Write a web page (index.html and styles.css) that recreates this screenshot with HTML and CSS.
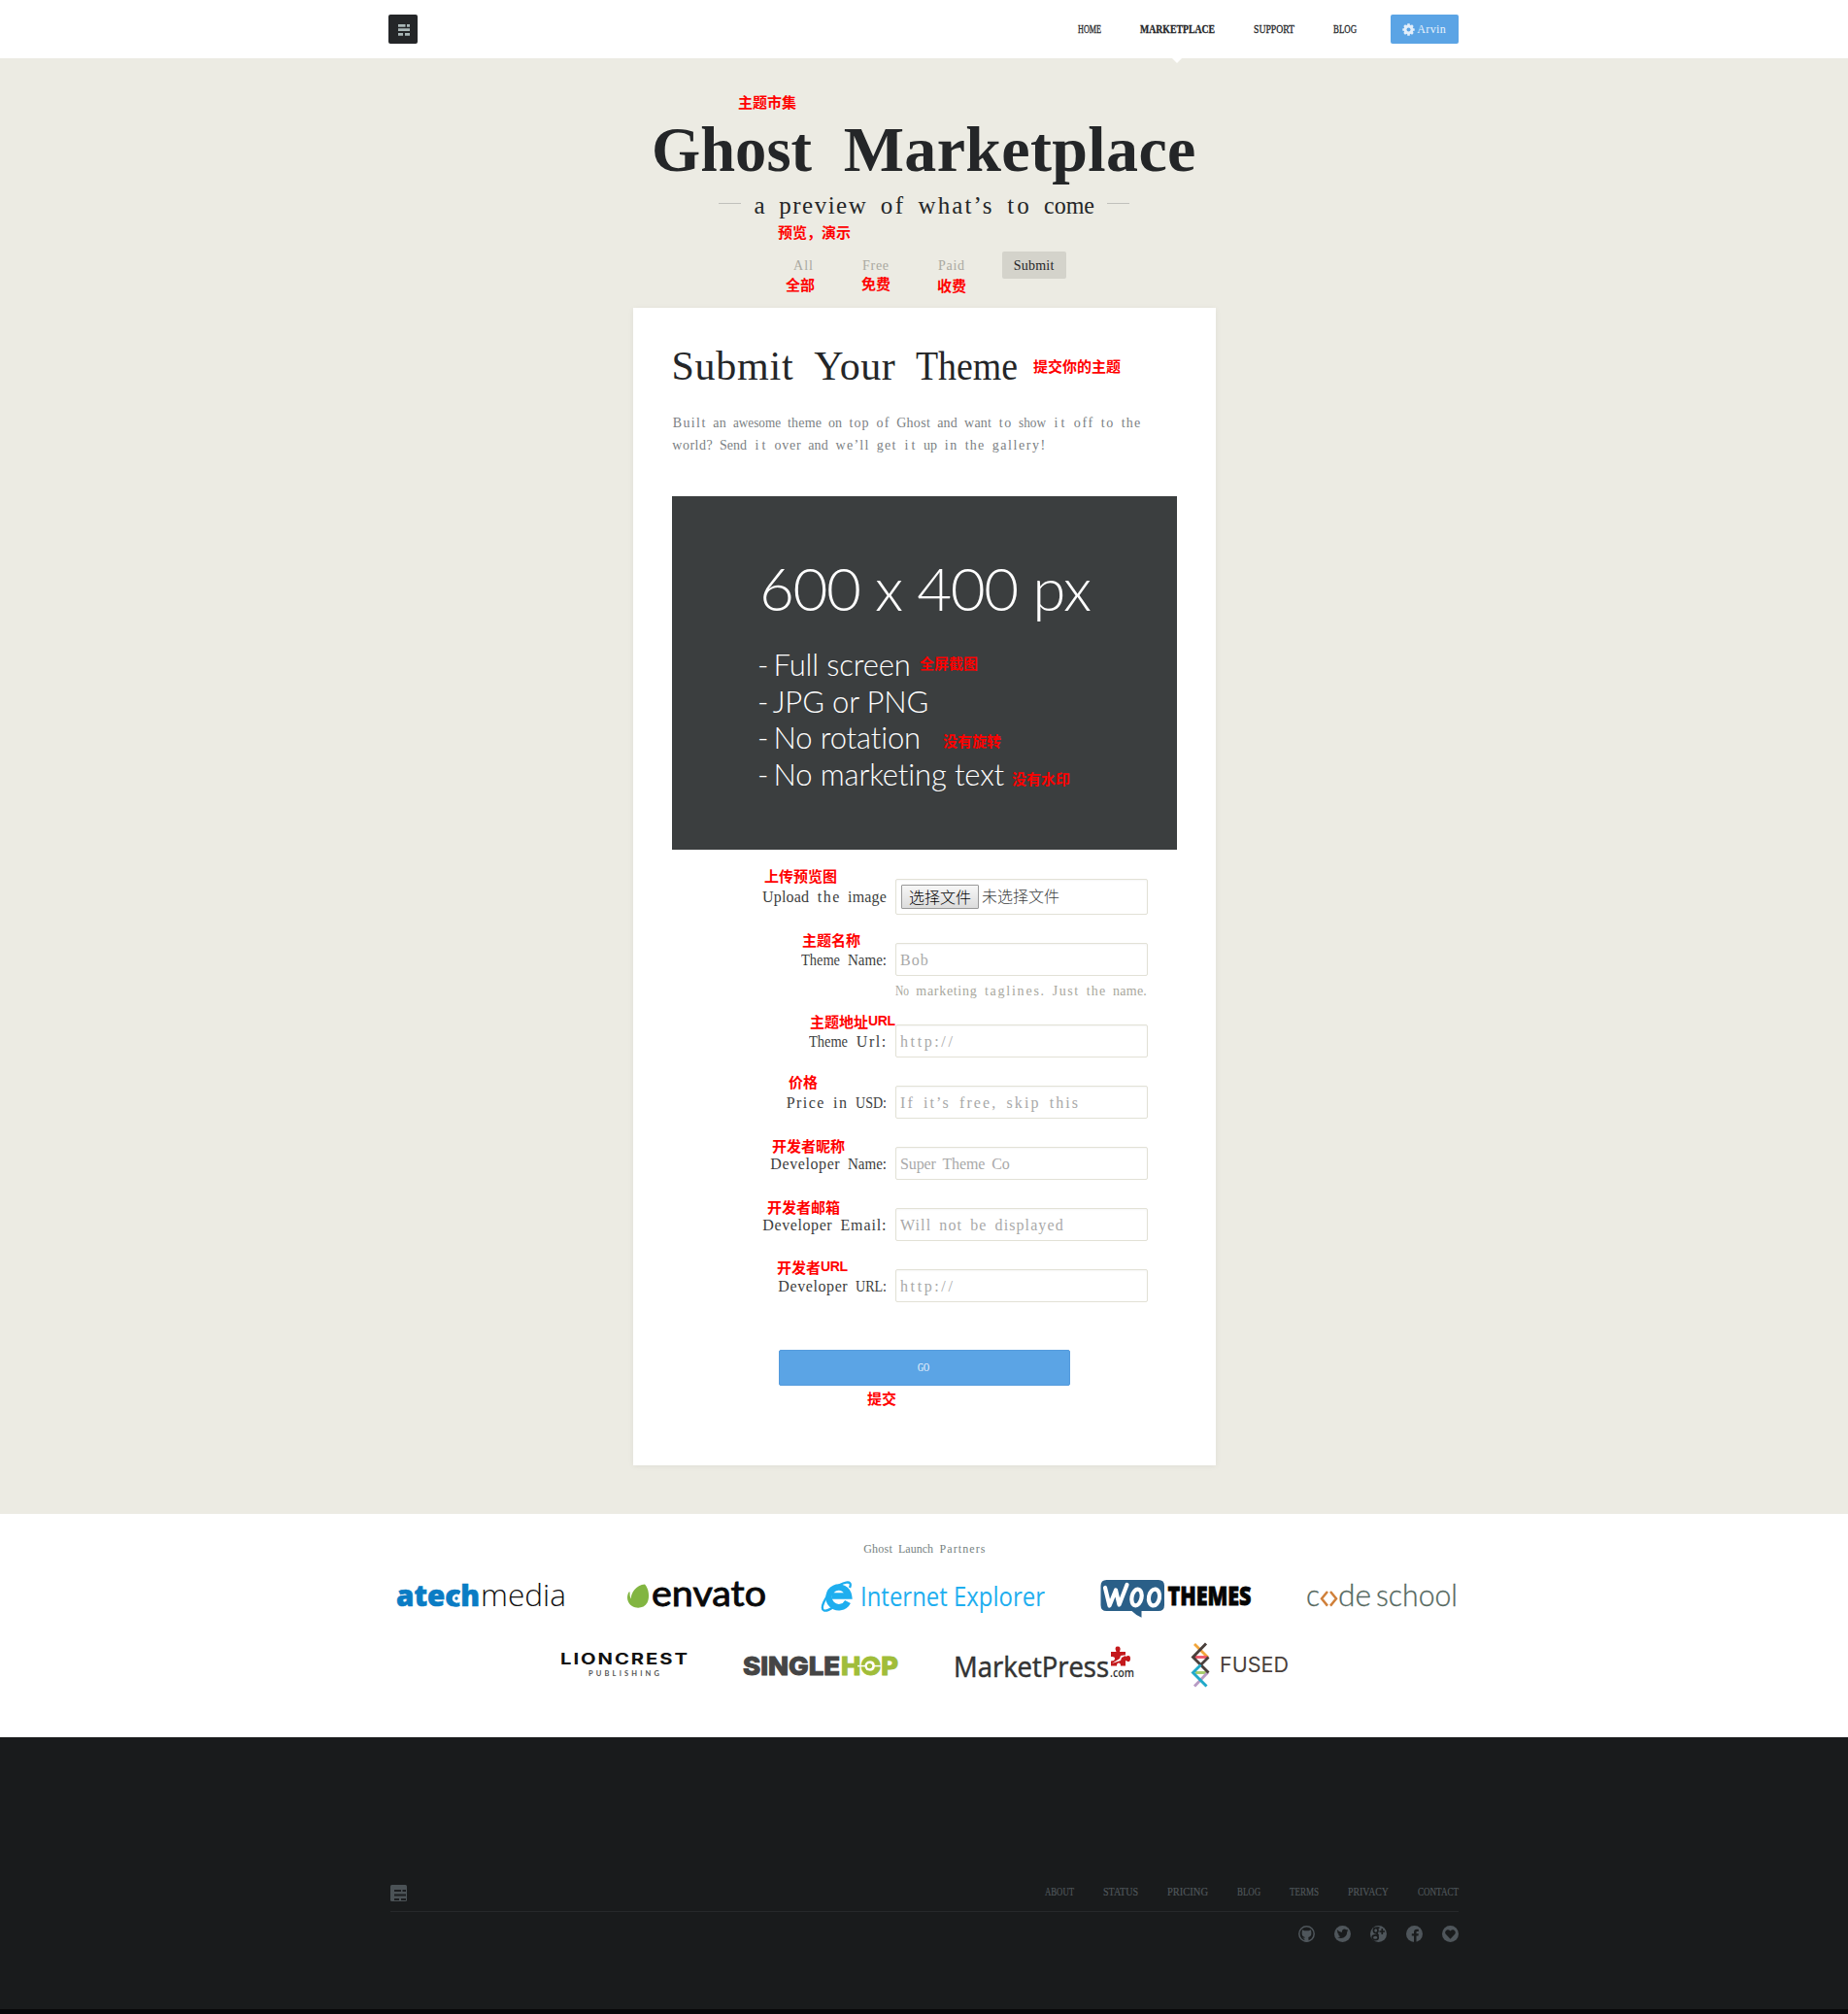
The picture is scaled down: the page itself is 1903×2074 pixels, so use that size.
FILE: index.html
```html
<!DOCTYPE html>
<html lang="en">
<head>
<meta charset="utf-8">
<title>Ghost Marketplace</title>
<link rel="stylesheet" href="styles.css">
</head>
<body>
<header class="top">
  <div class="top-inner">
    <a class="logo"><svg width="30" height="30" viewBox="0 0 30 30"><g fill="#a9b7b7"><path d="M10 10h7.5v2.7H10zM19 10h3v2.7h-3zM10 14.2h12v2.7H10zM10 19h5v2.7h-5zM17 19h5v2.7h-5z"/></g></svg></a>
    <nav class="menu">
      <a class="hw">HOME</a>
      <a class="hw current">MARKETPLACE</a>
      <a class="hw">SUPPORT</a>
      <a class="hw">BLOG</a>
    </nav>
    <a class="user"><svg width="13" height="13" viewBox="-6.5 -6.5 13 13"><g fill="#e2eefa"><circle r="4.9"/><g id="t"><rect x="-1.3" y="-6.2" width="2.6" height="12.4" rx=".5"/><rect x="-6.2" y="-1.3" width="12.4" height="2.6" rx=".5"/></g><use href="#t" transform="rotate(45)"/></g><circle r="2" fill="#5ba4e5"/></svg><span class="hw">Arvin</span></a>
  </div>
</header>

<main class="market">
  <h1 class="hw">Ghost Marketplace</h1>
  <p class="tagline"><i></i><span class="hw">a preview of what’s to come</span><i></i></p>
  <nav class="filters">
    <a class="hw">All</a>
    <a class="hw">Free</a>
    <a class="hw">Paid</a>
    <a class="hw active">Submit</a>
  </nav>
  <section class="card">
    <h2 class="hw">Submit Your Theme</h2>
    <p class="intro"><span class="hw">Built an awesome theme on top of Ghost and want to show it off to the</span><br><span class="hw">world? Send it over and we’ll get it up in the gallery!</span></p>
    <div class="sample">
      <div class="sample-size">600 x 400 px</div>
      <ul>
        <li><span class="dash">-</span> Full screen</li>
        <li><span class="dash">-</span> JPG or PNG</li>
        <li><span class="dash">-</span> No rotation</li>
        <li><span class="dash">-</span> No marketing text</li>
      </ul>
    </div>
    <form>
      <div class="row file"><label class="hw">Upload the image</label><div class="field"><button type="button">选择文件</button><span>未选择文件</span></div></div>
      <div class="row"><label class="hw">Theme Name:</label><input placeholder="Bob"></div>
      <div class="hint hw">No marketing taglines. Just the name.</div>
      <div class="row"><label class="hw">Theme Url:</label><input class="url" placeholder="http://"></div>
      <div class="row"><label class="hw">Price in USD:</label><input class="price" placeholder="If it’s free, skip this"></div>
      <div class="row"><label class="hw">Developer Name:</label><input placeholder="Super Theme Co" class="name"></div>
      <div class="row"><label class="hw">Developer Email:</label><input placeholder="Will not be displayed"></div>
      <div class="row"><label class="hw">Developer URL:</label><input class="url" placeholder="http://"></div>
      <button type="button" class="go"><span class="hw">GO</span></button>
    </form>
  </section>
</main>

<section class="partners">
  <p class="hw">Ghost Launch Partners</p>
  <div class="logos first">
    <svg width="187" height="48" viewBox="405 1622 187 48">
      <text x="408" y="1654" font-family="Open Sans" font-weight="800" font-size="30" fill="#0a7cc4" stroke="#0a7cc4" stroke-width=".6" textLength="86" lengthAdjust="spacingAndGlyphs">atech</text>
      <text x="495" y="1654" font-family="Open Sans" font-weight="300" font-size="31" fill="#111" textLength="88" lengthAdjust="spacingAndGlyphs">media</text>
      <circle cx="470" cy="1646" r="5.2" fill="#fff"/><path d="M473.5 1640.500A6.500 6.500 0 1 0 473 1652" fill="none" stroke="#0a7cc4" stroke-width="4"/><circle cx="470" cy="1646" r="1.700" fill="#0a7cc4"/>
    </svg>
    <svg width="150" height="48" viewBox="642 1622 150 48">
      <path d="M664 1631.500c4 4 5.500 13.500 2.500 19-3 5.500-10.500 6.500-15.500 3.500-5-3-6-9-4-13.500 1-1.800 1.700-1.500 1.600.2-.1 2.300.3 4.200 1.200 5.700-.2-6 5.200-14.300 14.200-14.900z" fill="#82b541"/>
      <text x="671" y="1654" font-family="Lato" font-weight="400" font-size="37" fill="#0a0a0a" stroke="#0a0a0a" stroke-width=".9" textLength="118" lengthAdjust="spacingAndGlyphs">envato</text>
    </svg>
    <svg width="238" height="48" viewBox="842 1622 238 48">
      <g fill="none" stroke="#1eaeef">
      <path d="M873 1649.500a10.300 10.300 0 1 1 1-6h-17" stroke-width="6.500"/>
      <path d="M875 1635c4-9-8-6-17 2s-14 20-9.500 21.500c2.500.8 6-1 9.500-3.500" stroke-width="2.300"/>
      </g>
      <text x="886" y="1653.500" font-family="Open Sans" font-size="27" fill="#1eaeef" textLength="190" lengthAdjust="spacingAndGlyphs">Internet Explorer</text>
    </svg>
    <svg width="162" height="48" viewBox="1130 1622 162 48">
      <path d="M1139.500 1627h53.500q6 0 6 6v20q0 6-6 6h-17.500v6.700q-6-2.500-10-6.700h-26q-6 0-6-6v-20q0-6 6-6z" fill="#2a5f88"/>
      <g fill="none" stroke="#fff" stroke-width="4.200" stroke-linecap="round" stroke-linejoin="round"><path d="M1138 1635l4.500 18.500 6.500-16 3.500 15 8-20.500"/><ellipse cx="1170.500" cy="1645" rx="5" ry="8.500" transform="rotate(12 1170.500 1645)"/><ellipse cx="1188.500" cy="1645" rx="5.500" ry="8.500" transform="rotate(10 1188.500 1645)"/></g>
      <text x="1202.500" y="1653.300" font-family="Open Sans" font-weight="800" font-size="27" fill="#050505" stroke="#050505" stroke-width=".8" textLength="86" lengthAdjust="spacingAndGlyphs">THEMES</text>
    </svg>
    <svg width="160" height="48" viewBox="1342 1622 160 48">
      <g font-family="Lato" font-weight="300" font-size="32" fill="#56695f" stroke="#56695f" stroke-width=".3">
      <text x="1345" y="1654" textLength="14" lengthAdjust="spacingAndGlyphs">c</text>
      <text x="1378" y="1654" textLength="34" lengthAdjust="spacingAndGlyphs">de</text>
      <text x="1417" y="1654" textLength="84" lengthAdjust="spacingAndGlyphs">school</text></g>
      <path d="M1367 1639l-6 7.300 6 7.300M1370 1639l6 7.300-6 7.300" fill="none" stroke="#d0803a" stroke-width="2.500"/>
    </svg>
  </div>
  <div class="logos second">
    <svg width="137" height="50" viewBox="574 1690 137 50">
      <text x="577" y="1714" font-family="Inter" font-weight="700" font-size="15.500" letter-spacing="1.500" fill="#111" textLength="133" lengthAdjust="spacingAndGlyphs">LIONCREST</text>
      <text x="606" y="1726.300" font-family="Lato" font-weight="700" font-size="7.500" fill="#555" textLength="73">PUBLISHING</text>
    </svg>
    <svg width="169" height="50" viewBox="761 1690 169 50">
      <g font-family="Inter" font-weight="800" font-size="26"><text x="765" y="1725.300" fill="#454545" stroke="#454545" textLength="100" lengthAdjust="spacingAndGlyphs">SINGLE</text>
      <text x="866" y="1725.300" fill="#a0bd3a" stroke="#a0bd3a" textLength="59" lengthAdjust="spacingAndGlyphs">HOP</text></g>
      <path d="M883 1715.600h24" stroke="#fff" stroke-width="1.500"/><circle cx="895.500" cy="1715.600" r="5" fill="#fff"/><circle cx="895.500" cy="1715.600" r="2.700" fill="#a0bd3a"/>
    </svg>
    <svg width="192" height="50" viewBox="980 1690 192 50">
      <text x="982" y="1726.500" font-family="Open Sans" font-size="29" fill="#333" stroke="#333" stroke-width=".5" textLength="160" lengthAdjust="spacingAndGlyphs">MarketPress</text>
      <text x="1143" y="1726.500" font-family="Open Sans" font-size="12.500" font-weight="600" fill="#333" textLength="25" lengthAdjust="spacingAndGlyphs">.com</text>
      <path d="M1144 1701h5.500q-2.500-5.500 1.500-5.500t2 5.500h6v5q5-3 5 2t-5 2v5.500h-5q0-3-2-3t-2 3h-6v-5q4 0 4-2.500t-4-2z" fill="#c4191c"/><path d="M1145 1713l8-5 1-3 7-1-6 3-1 3z" fill="#fff"/>
    </svg>
    <svg width="108" height="50" viewBox="1222 1690 108 50">
      <g fill="none" stroke-width="2.900">
      <path d="M1230 1693l14 14" stroke="#f2a53a"/><path d="M1230 1706.500h13" stroke="#ee5a6b"/><path d="M1231 1722.500h12" stroke="#a5cc6b"/><path d="M1244 1722l-14 14.500" stroke="#b79bc4"/>
      <path d="M1242 1692.500l-13.500 14 16 16" stroke="#4a3f3b"/><path d="M1244.500 1706.500l-8 8" stroke="#4a3f3b"/><path d="M1236.500 1714.500l-8 8 14 14" stroke="#20a9c9"/></g>
      <text x="1256" y="1722" font-family="Inter" font-size="21.500" fill="#4a3f3b" textLength="71" lengthAdjust="spacingAndGlyphs">FUSED</text>
    </svg>
  </div>
</section>

<footer class="bottom">
  <div class="foot-top">
    <svg width="17" height="17" viewBox="0 0 17 17"><rect width="17" height="17" rx="1.500" fill="#4b5256"/><path d="M4 5h7v2H4zM12.500 5H16v2h-3.500zM4 9.500h12v2H4zM4 14h5v2H4zM11 14h5v2h-5z" fill="#1b1d1f"/></svg>
    <nav>
      <a class="hw">ABOUT</a><a class="hw">STATUS</a><a class="hw">PRICING</a><a class="hw">BLOG</a><a class="hw">TERMS</a><a class="hw">PRIVACY</a><a class="hw">CONTACT</a>
    </nav>
  </div>
  <div class="social">
    <svg viewBox="0 0 17 17"><circle cx="8.500" cy="8.500" r="7.700" fill="none" stroke="#4f565b" stroke-width="1.500"/><path d="M4 4.200l2.300 1h4.400l2.300-1 .4 3.300c.2 3-1.600 4.200-3.100 4.500l.4 4.500H6.300V14L4 12.500l2.300.2.600-.7C5 11.600 3.500 10.500 3.600 7.500z" fill="#4f565b"/></svg>
    <svg viewBox="0 0 17 17"><circle cx="8.500" cy="8.500" r="8.500" fill="#4f565b"/><path d="M3 4.300c1.300 1.500 3 2.300 5 2.400-.4-3 2.800-3.900 4.300-2.400l1.700-.5-.8 1.400 1.200-.3-1.200 1.400c.2 5-5 8.500-10 5.700 1.400 0 2.400-.3 3.200-1C5 10.700 4.300 10 4 9.200h1.200C3.900 8.600 3.200 7.700 3.200 6.600l1 .2C3 6 2.600 5.300 3 4.300z" fill="#191b1c"/></svg>
    <svg viewBox="0 0 17 17"><circle cx="8.500" cy="8.500" r="8.500" fill="#4f565b"/><g fill="none" stroke="#191b1c" stroke-width="1.700"><ellipse cx="5.700" cy="5" rx="2.300" ry="2.600"/><ellipse cx="5.200" cy="12.300" rx="3" ry="2.400"/><path d="M6.500 2.200h3M6.500 7.500l2 3M12.300 3v6M9.500 6h5.500"/></g></svg>
    <svg viewBox="0 0 17 17"><circle cx="8.500" cy="8.500" r="8.500" fill="#4f565b"/><path d="M8 17v-6.500H5.800V8.300H8V6.700C8 4.800 9 3.800 10.800 3.800h2V6h-1.300c-.8 0-1 .3-1 1v1.300h2.300l-.3 2.200h-2V17z" fill="#191b1c"/></svg>
    <svg viewBox="0 0 17 17"><circle cx="8.500" cy="8.500" r="8.500" fill="#4f565b"/><path d="M8.500 13.700L3.800 8.800C1.700 6.200 5.600 2.300 8.500 5.600c2.900-3.300 6.800.6 4.700 3.200z" fill="#191b1c"/></svg>
  </div>
</footer>

<div class="notes">
  <b style="left:760px;top:97px">主题市集</b>
  <b style="left:801px;top:231px">预览，演示</b>
  <b style="left:809px;top:285px">全部</b>
  <b style="left:887px;top:284px">免费</b>
  <b style="left:965px;top:286px">收费</b>
  <b style="left:1064px;top:369px">提交你的主题</b>
  <b style="left:947px;top:675px">全屏截图</b>
  <b style="left:971px;top:755px">没有旋转</b>
  <b style="left:1042px;top:794px">没有水印</b>
  <b style="left:787px;top:894px">上传预览图</b>
  <b style="left:826px;top:960px">主题名称</b>
  <b style="left:834px;top:1044px">主题地址<em>URL</em></b>
  <b style="left:812px;top:1106px">价格</b>
  <b style="left:795px;top:1172px">开发者昵称</b>
  <b style="left:790px;top:1235px">开发者邮箱</b>
  <b style="left:800px;top:1297px">开发者<em>URL</em></b>
  <b style="left:893px;top:1432px">提交</b>
</div>
<script src="halfwidth.js"></script>
</body>
</html>
```
FILE: halfwidth.js
```js
// Sets every word of a .hw element on a half-width grid: one cell per character.
document.querySelectorAll('.hw').forEach(function (el) {
  var cs = getComputedStyle(el);
  var size = parseFloat(cs.fontSize);
  var cell = parseFloat(cs.getPropertyValue('--cell')) || size / 2;
  var words = el.textContent.trim().split(/\s+/);
  el.textContent = '';
  el.style.wordSpacing = (cell - size * 0.25) + 'px';
  words.forEach(function (word, i) {
    if (i) el.appendChild(document.createTextNode(' '));
    var s = document.createElement('span');
    s.className = 'w';
    s.textContent = word;
    el.appendChild(s);
    var natural = s.getBoundingClientRect().width;
    var target = word.length * cell;
    if (natural <= target) {
      var gap = (target - natural) / word.length;
      s.style.letterSpacing = gap + 'px';
      s.style.textIndent = gap / 2 + 'px';
    } else {
      s.style.transform = 'scaleX(' + target / natural + ')';
    }
    s.style.width = target + 'px';
  });
});
```
FILE: styles.css
```css
* { box-sizing: border-box; }
body { margin: 0; position: relative; background: #fff; color: #242628; font-family: "Liberation Serif", "Noto Sans CJK SC", serif; font-size: 16px; }
h1, h2, p, ul { margin: 0; padding: 0; font-weight: 400; list-style: none; }
.hw { white-space: nowrap; }
.w { display: inline-block; white-space: pre; transform-origin: 0 50%; }

.top { height: 60px; padding-left: 1px; }
.top-inner { width: 1104px; height: 60px; margin: 0 auto; padding-right: 2px; display: flex; align-items: center; }
.logo { width: 30px; height: 30px; background: #242628; border-radius: 2px; }
.logo svg, .user svg, .logos svg, .bottom svg { display: block; }
.menu { margin-left: auto; display: flex; gap: 40px; font-size: 12px; line-height: 60px; -webkit-text-stroke: .3px #242628; }
.current { --cell: 7; font-weight: 700; position: relative; }
.current::after { content: ""; position: absolute; left: 33px; top: 60px; border: 5px solid transparent; border-top-color: #fff; border-bottom: 0; }
.user { margin-left: 35px; width: 70px; height: 30px; background: #5ba4e5; border-radius: 2px; display: flex; align-items: center; padding-left: 12px; gap: 2px; color: #e6f1fb; font-size: 12px; line-height: 30px; }

.market { height: 1499px; padding-left: 1px; background: #ecebe3; }
h1 { --cell: 33; height: 127px; padding: 61px 2px 0 0; font-size: 66px; line-height: 65px; font-weight: 700; text-align: center; }
.tagline { --cell: 13; padding-right: 2px; display: flex; justify-content: center; gap: 13px; font-size: 25px; line-height: 49px; height: 48px; }
.tagline i { width: 23px; height: 1px; margin-top: 22px; background: #c0c0bb; }
.filters { margin-top: 24px; padding-right: 2px; display: flex; justify-content: center; gap: 26px; font-size: 14px; line-height: 30px; color: #aaa9a1; }
.filters a { height: 28px; padding: 0 12px; }
.filters .active { background: #d4d3cb; color: #242628; border-radius: 2px; }
.card { width: 600px; height: 1192px; margin: 30px auto 0; padding: 35px 40px 0; background: #fff; box-shadow: 0 1px 6px rgba(0, 0, 0, .06); }
h2 { margin-left: -1px; font-size: 42px; line-height: 50px; }
.intro { margin-top: 22px; font-size: 14px; line-height: 23px; color: #7b7f84; }
.sample { margin-top: 41px; height: 364px; padding: 58px 0 0 89px; background: #3b3e3f; color: #fff; font-family: Lato, sans-serif; font-weight: 300; }
.sample-size { padding-left: 1px; font-size: 62px; line-height: 72px; letter-spacing: -1.4px; }
.sample ul { margin: 25px 0 0 -1px; font-size: 31px; font-weight: 300; line-height: 37.6px; letter-spacing: -.15px; white-space: nowrap; }
.dash { margin-right: -3px; }

form { padding-top: 30px; }
.row { display: grid; grid-template-columns: 221px 260px; column-gap: 9px; height: 34px; margin-bottom: 29px; line-height: 36px; color: #3c3e40; }
.row label { text-align: right; }
.row input, .field { width: 260px; height: 34px; border: 1px solid #e2e1d6; border-radius: 2px; padding: 1px 4px 0; background: #fff; box-shadow: inset 0 1px 2px rgba(0, 0, 0, .04); font: 16px "Liberation Serif", serif; letter-spacing: 1.1px; word-spacing: 3px; }
.row input::placeholder { color: #a9a9a9; opacity: 1; }
.row .url { letter-spacing: 2.6px; }
.row .price { letter-spacing: 2.1px; }
.row .name { letter-spacing: -.1px; }
.file { height: 37px; line-height: 37px; }
.row .field { height: 37px; padding: 0 5px 1px; display: flex; align-items: center; gap: 3px; letter-spacing: 0; font: 300 16px/32px "Noto Sans CJK SC", sans-serif; }
.field span { margin-top: -2px; }
.file button { width: 80px; height: 25px; padding: 0; border: 1px solid #999; border-radius: 1px; background: linear-gradient(#f7f7f7, #dcdcdc); color: #000; font: 300 16px/20px "Noto Sans CJK SC", sans-serif; }
.hint { height: 21px; margin: -29px 0 29px 230px; line-height: 32px; font-size: 14px; color: #a8a79d; }
.go { display: block; width: 300px; height: 37px; margin: 49px auto 0; padding: 0 2px 0 0; border: 1px solid #559bdc; border-radius: 2px; background: #5ba4e5; color: #fff; font: 12px/35px "Liberation Serif", serif; }

.partners { height: 230px; padding: 27px 0 0 1px; }
.partners p { font-size: 12px; line-height: 18px; text-align: center; color: #76827f; }
.logos { width: 1100px; margin: 0 auto; display: flex; gap: 50px; }
.logos svg { overflow: visible; }
.first { justify-content: flex-end; margin-top: 18px; }
.second { justify-content: center; margin-top: 20px; }

.bottom { height: 285px; padding: 141px 0 0 1px; background: #191b1c; border-bottom: 5px solid #080809; color: #50575b; }
.foot-top { width: 1100px; height: 39px; margin: 0 auto; padding-top: 11px; border-bottom: 1px solid #26282a; display: flex; justify-content: space-between; }
.foot-top nav { display: flex; gap: 30px; font-size: 12px; line-height: 14px; -webkit-text-stroke: .2px #50575b; }
.social { width: 1100px; margin: 14px auto 0; display: flex; justify-content: flex-end; gap: 20px; }
.social svg { width: 17px; height: 17px; }

.notes b { position: absolute; font: 700 15px/15px "Noto Sans CJK SC", sans-serif; color: #f00; white-space: nowrap; }
.notes em { font: 700 14px/14px "Liberation Sans", sans-serif; letter-spacing: -.4px; position: relative; top: -2px; }
```
